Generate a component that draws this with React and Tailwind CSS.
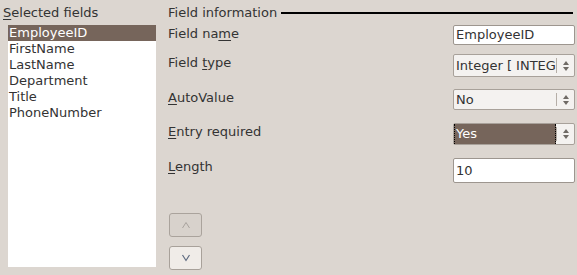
const fields = ["EmployeeID", "FirstName", "LastName", "Department", "Title", "PhoneNumber"];

function Spin() {
  return (
    <div className="flex h-full items-center">
      <div className="h-[70%] w-px bg-[#b5aea7]" />
      <svg width="16" height="14" viewBox="0 0 16 14" className="ml-[1px]">
        <path d="M8 2 L11 6 L5 6 Z" fill="#6f6a65" />
        <path d="M8 12 L11 8 L5 8 Z" fill="#6f6a65" />
      </svg>
    </div>
  );
}

function Row({ label, h, children, className = "" }) {
  return (
    <div className={`flex items-start justify-between ${className}`}>
      <div className="pt-[1px] leading-[16px]">{label}</div>
      <div className={`w-[122px] ${h}`}>{children}</div>
    </div>
  );
}

export default function App() {
  return (
    <div
      className="flex h-[275px] w-[577px] bg-[#dcd6d0] text-[13px] text-[#333]"
      style={{ fontFamily: '"DejaVu Sans", sans-serif' }}
    >
      <div className="flex w-[156px] flex-col pl-[3px] pt-[5px]">
        <div className="leading-[16px]">
          <u className="underline-offset-2">S</u>elected fields
        </div>
        <div className="ml-[5px] mt-[4px] h-[242px] w-[148px] bg-white">
          {fields.map((f, i) => (
            <div
              key={f}
              className={`h-[16px] pl-[1px] leading-[16px] ${i === 0 ? "bg-[#76655b] text-white" : ""}`}
            >
              {f}
            </div>
          ))}
        </div>
      </div>

      <div className="ml-[12px] flex w-[407px] flex-col pt-[5px]">
        <div className="flex items-center leading-[16px]">
          <span>Field information</span>
          <div className="ml-[4px] mr-[2px] h-[1.5px] flex-1 bg-black" />
        </div>

        <Row label={<>Field na<u className="underline-offset-2">m</u>e</>} h="h-[20px]" className="mt-[4px]">
          <div className="flex h-full items-center rounded-[2px] border border-[#9d968f] bg-white pl-[2px]">
            EmployeeID
          </div>
        </Row>

        <Row label={<>Field <u className="underline-offset-2">t</u>ype</>} h="h-[23px]" className="mt-[9px]">
          <div className="flex h-full items-center rounded-[2px] border border-[#a8a19a] bg-[#f4f2f0] pl-[2px]">
            <span className="flex-1 overflow-hidden whitespace-nowrap">Integer [ INTEGER ]</span>
            <Spin />
          </div>
        </Row>

        <Row label={<><u className="underline-offset-2">A</u>utoValue</>} h="h-[21px]" className="mt-[12px]">
          <div className="flex h-full items-center rounded-[2px] border border-[#a8a19a] bg-[#f4f2f0] pl-[2px]">
            <span className="flex-1">No</span>
            <Spin />
          </div>
        </Row>

        <Row label={<><u className="underline-offset-2">E</u>ntry required</>} h="h-[22px]" className="mt-[13px]">
          <div className="flex h-full items-center rounded-[2px] border border-[#a8a19a] bg-[#f4f2f0]">
            <span className="flex h-full flex-1 items-center border-x border-dotted border-black bg-[#76655b] pl-[1px] text-white">
              Yes
            </span>
            <Spin />
          </div>
        </Row>

        <Row label={<><u className="underline-offset-2">L</u>ength</>} h="h-[25px]" className="mt-[13px]">
          <div className="flex h-full items-center rounded-[2px] border border-[#9d968f] bg-white pl-[2px]">
            10
          </div>
        </Row>

        <div className="ml-[1px] mt-[30px] flex flex-col gap-[9px]">
          <button className="flex h-[24px] w-[33px] items-center justify-center rounded-[3px] border border-[#aaa39c] bg-[#d8d2cc]">
            <svg width="10" height="8" viewBox="0 0 10 8">
              <path d="M1.5 7 L5 1.5 L8.5 7" fill="none" stroke="#a9a39e" strokeWidth="1" />
            </svg>
          </button>
          <button className="flex h-[24px] w-[33px] items-center justify-center rounded-[3px] border border-[#a8a19a] bg-[#f0ece8]">
            <svg width="10" height="8" viewBox="0 0 10 8">
              <path d="M1.5 1 L5 6.5 L8.5 1" fill="none" stroke="#5e6b80" strokeWidth="1.2" />
            </svg>
          </button>
        </div>
      </div>
    </div>
  );
}
